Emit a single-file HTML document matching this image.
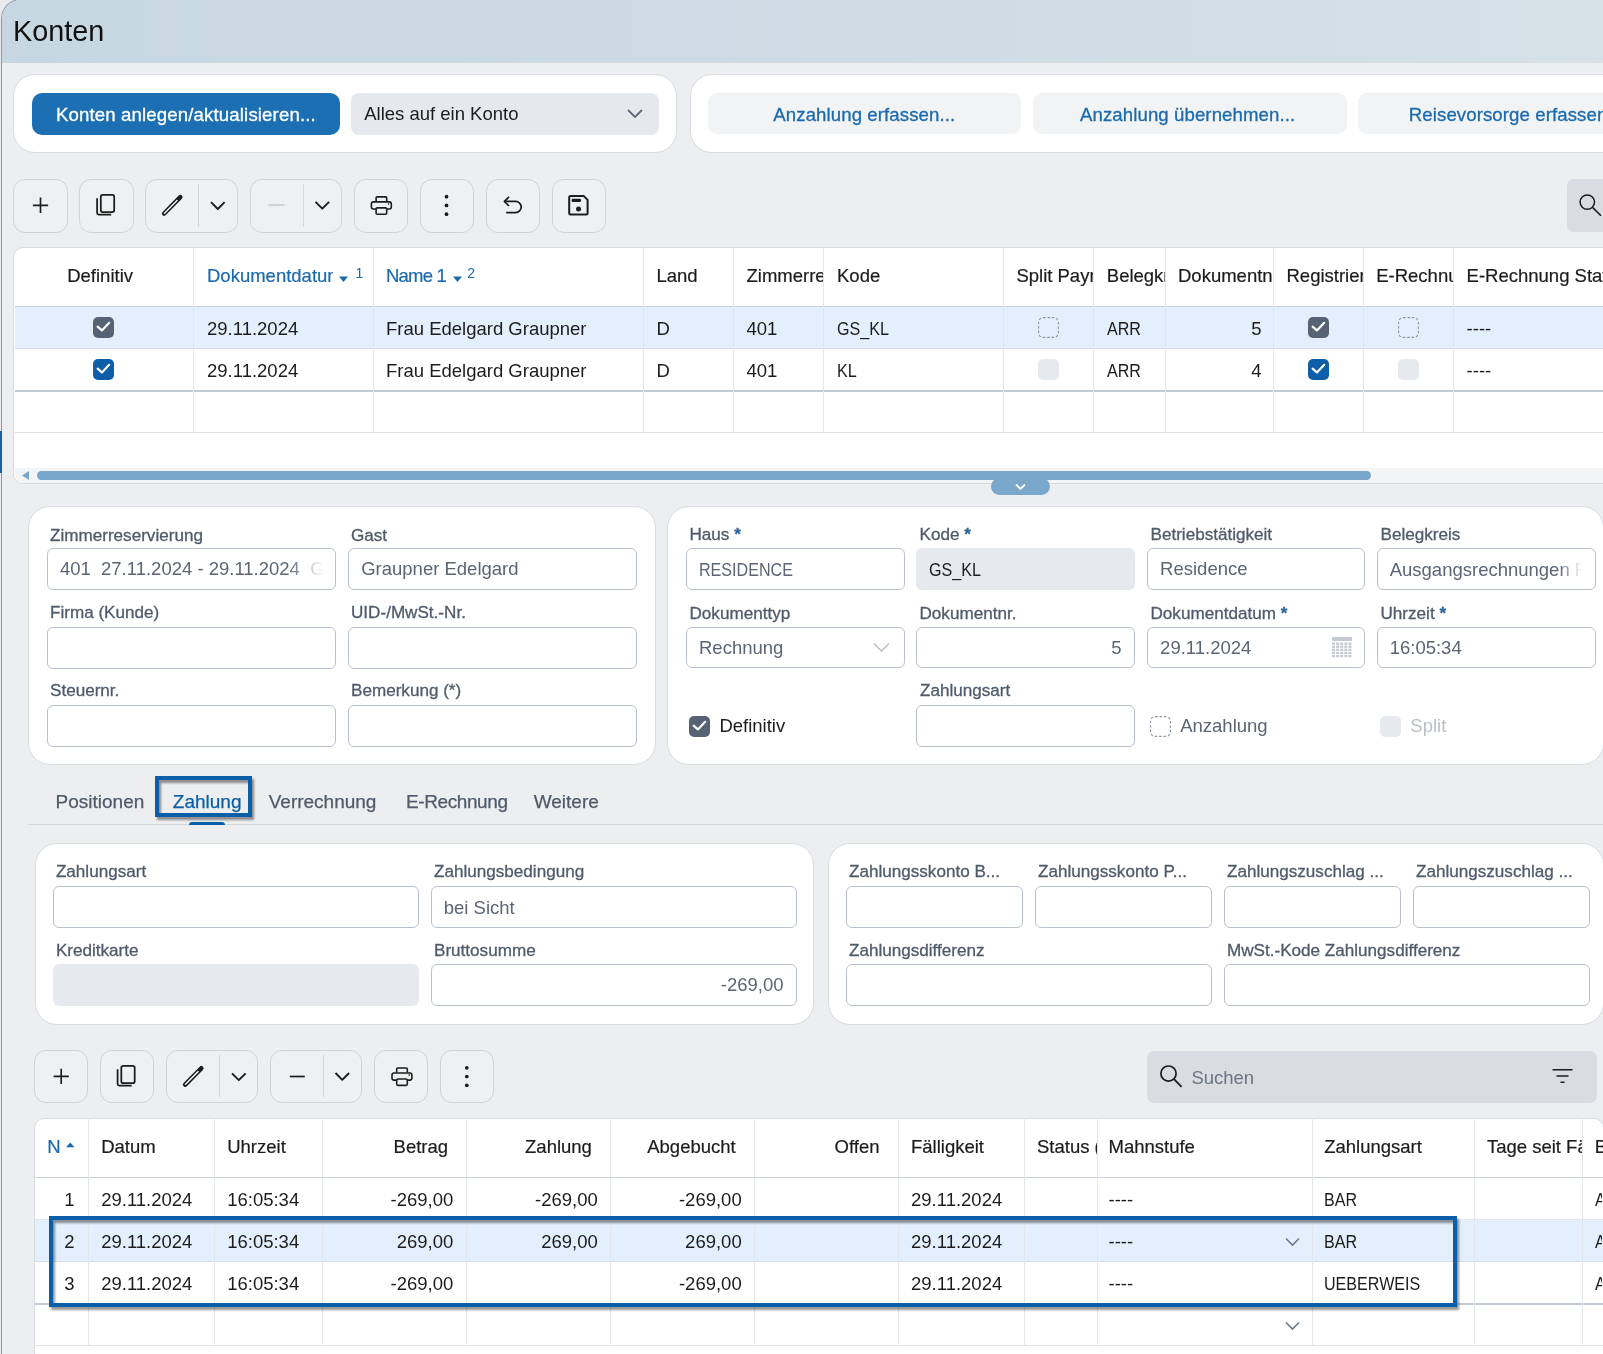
<!DOCTYPE html><html><head><meta charset="utf-8"><style>
*{box-sizing:border-box;margin:0;padding:0}
html,body{width:1603px;height:1354px;overflow:hidden}
body{position:relative;will-change:transform;background:#e8eaee;font-family:"Liberation Sans",sans-serif;color:#1c1c1c}
.a{position:absolute}
.t{position:absolute;white-space:nowrap;line-height:1}
svg{position:absolute;overflow:visible}
</style></head><body><div class="a" style="left:1px;top:-1px;width:1700px;height:1400px;background:#edeef0;border-left:1.3px solid #8e98a6;border-top:1.3px solid #8e98a6;border-top-left-radius:20px"></div><div class="a" style="left:2.3px;top:0.3px;width:1700px;height:62.7px;background:linear-gradient(90deg,#c7d7e1 0%,#cddae3 40%,#d6e1e8 100%);border-top-left-radius:19px"></div><div class="t" style="left:13.0px;top:17.1px;font-size:28.8px;color:#111;">Konten</div><div class="a" style="left:0px;top:431px;width:2px;height:42px;background:#1f5f9c"></div><div class="a" style="left:13px;top:74px;width:664px;height:79px;background:#fff;border:1px solid #d8dce2;border-radius:22px"></div><div class="a" style="left:32px;top:93px;width:308px;height:42px;background:#1b6fb2;border-radius:10px"></div><div class="t" style="left:55.9px;top:105.7px;font-size:18.6px;color:#fff;-webkit-text-stroke:0.3px #fff;letter-spacing:0.15px">Konten anlegen/aktualisieren...</div><div class="a" style="left:351px;top:93px;width:308px;height:42px;background:#e5e8ec;border-radius:8px"></div><div class="t" style="left:364.2px;top:105.1px;font-size:18.5px;color:#1c1c1c;">Alles auf ein Konto</div><svg style="left:627px;top:109px" width="16" height="9"><path d="M1 1 L8 8 L15 1" fill="none" stroke="#5d6878" stroke-width="1.8"/></svg><div class="a" style="left:690px;top:74px;width:1010px;height:79px;background:#fff;border:1px solid #d8dce2;border-radius:22px"></div><div class="a" style="left:708px;top:93px;width:313px;height:41px;background:#f1f3f5;border-radius:9px"></div><div class="t" style="left:773.3px;top:106.3px;font-size:18.6px;color:#1b6aad;-webkit-text-stroke:0.3px #1b6aad;letter-spacing:0.1px">Anzahlung erfassen...</div><div class="a" style="left:1033px;top:93px;width:314px;height:41px;background:#f1f3f5;border-radius:9px"></div><div class="t" style="left:1080.0px;top:106.3px;font-size:18.6px;color:#1b6aad;-webkit-text-stroke:0.3px #1b6aad;letter-spacing:0.1px">Anzahlung übernehmen...</div><div class="a" style="left:1358px;top:93px;width:342px;height:41px;background:#f1f3f5;border-radius:9px"></div><div class="t" style="left:1408.8px;top:106.3px;font-size:18.6px;color:#1b6aad;-webkit-text-stroke:0.3px #1b6aad;letter-spacing:0.1px">Reisevorsorge erfassen...</div><div class="a" style="left:13px;top:179px;width:55px;height:54px;border:1px solid #cfd3d9;border-radius:12px;background:#eef0f2"></div><div class="a" style="left:79px;top:179px;width:55px;height:54px;border:1px solid #cfd3d9;border-radius:12px;background:#eef0f2"></div><div class="a" style="left:145px;top:179px;width:93px;height:54px;border:1px solid #cfd3d9;border-radius:12px;background:#eef0f2"></div><div class="a" style="left:198.1px;top:184px;width:1px;height:43px;background:#d2d6db"></div><div class="a" style="left:250px;top:179px;width:92px;height:54px;border:1px solid #cfd3d9;border-radius:12px;background:#eef0f2"></div><div class="a" style="left:303.0px;top:184px;width:1px;height:43px;background:#d2d6db"></div><div class="a" style="left:354px;top:179px;width:54px;height:54px;border:1px solid #cfd3d9;border-radius:12px;background:#eef0f2"></div><div class="a" style="left:420px;top:179px;width:54px;height:54px;border:1px solid #cfd3d9;border-radius:12px;background:#eef0f2"></div><div class="a" style="left:486px;top:179px;width:54px;height:54px;border:1px solid #cfd3d9;border-radius:12px;background:#eef0f2"></div><div class="a" style="left:552px;top:179px;width:54px;height:54px;border:1px solid #cfd3d9;border-radius:12px;background:#eef0f2"></div><div class="a" style="left:1567px;top:179px;width:133px;height:53px;background:#d9dce1;border-radius:7px"></div><div class="a" style="left:13px;top:247px;width:1687px;height:237px;background:#fff;border:1px solid #d8dce2;border-top-left-radius:10px;border-bottom-left-radius:10px;overflow:hidden"></div><div class="a" style="left:15px;top:307px;width:1685px;height:41px;background:#e3effc"></div><div class="a" style="left:15px;top:306px;width:1685px;height:1px;background:#c9d0d8"></div><div class="a" style="left:15px;top:348px;width:1685px;height:1px;background:#d5dde8"></div><div class="a" style="left:15px;top:390px;width:1685px;height:2px;background:#c3cad3"></div><div class="a" style="left:15px;top:432px;width:1685px;height:1px;background:#dfe3e8"></div><div class="a" style="left:193px;top:248px;width:1px;height:185px;background:#e3e7ec"></div><div class="a" style="left:373px;top:248px;width:1px;height:185px;background:#e3e7ec"></div><div class="a" style="left:643px;top:248px;width:1px;height:185px;background:#e3e7ec"></div><div class="a" style="left:733px;top:248px;width:1px;height:185px;background:#e3e7ec"></div><div class="a" style="left:823px;top:248px;width:1px;height:185px;background:#e3e7ec"></div><div class="a" style="left:1003px;top:248px;width:1px;height:185px;background:#e3e7ec"></div><div class="a" style="left:1093px;top:248px;width:1px;height:185px;background:#e3e7ec"></div><div class="a" style="left:1165px;top:248px;width:1px;height:185px;background:#e3e7ec"></div><div class="a" style="left:1273px;top:248px;width:1px;height:185px;background:#e3e7ec"></div><div class="a" style="left:1363px;top:248px;width:1px;height:185px;background:#e3e7ec"></div><div class="a" style="left:1453px;top:248px;width:1px;height:185px;background:#e3e7ec"></div><div class="a" style="left:15px;top:468px;width:1685px;height:15px;background:#f3f4f6;border-bottom-left-radius:9px"></div><div class="a" style="left:37px;top:471px;width:1334px;height:9px;background:#78a7cb;border-radius:5px"></div><svg style="left:0;top:0" width="1603" height="1354"><path d="M22 475.5 L29 471 L29 480 Z" fill="#78a7cb"/></svg><div class="a" style="left:991px;top:478px;width:59px;height:17px;background:#7aa7cc;border-radius:9px"></div><svg style="left:0;top:0" width="1603" height="1354"><path d="M1016 484.5 L1020.5 489 L1025 484.5" fill="none" stroke="#fff" stroke-width="1.8"/></svg><div class="t" style="left:67.2px;top:263.0px;width:125.8px;overflow:hidden;font-size:18.5px;color:#1c1c1c;line-height:1.4;-webkit-text-stroke:0.2px currentColor">Definitiv</div><div class="t" style="left:207.0px;top:263.0px;width:126.0px;overflow:hidden;font-size:18.5px;color:#1b6aad;line-height:1.4;-webkit-text-stroke:0.2px currentColor">Dokumentdatum</div><svg style="left:0;top:0" width="1603" height="1354"><path d="M339 276.5 L348 276.5 L343.5 282 Z" fill="#1b6aad"/><path d="M453 276.5 L462 276.5 L457.5 282 Z" fill="#1b6aad"/></svg><div class="t" style="left:355.5px;top:265.6px;font-size:14px;color:#1b6aad;">1</div><div class="t" style="left:386.0px;top:263.0px;width:64.0px;overflow:hidden;font-size:18.5px;color:#1b6aad;line-height:1.4;-webkit-text-stroke:0.2px currentColor;letter-spacing:-0.8px">Name 1</div><div class="t" style="left:467.3px;top:266.0px;font-size:14px;color:#1b6aad;">2</div><div class="t" style="left:656.5px;top:263.0px;width:76.5px;overflow:hidden;font-size:18.5px;color:#1c1c1c;line-height:1.4;-webkit-text-stroke:0.2px currentColor">Land</div><div class="t" style="left:746.5px;top:263.0px;width:76.5px;overflow:hidden;font-size:18.5px;color:#1c1c1c;line-height:1.4;-webkit-text-stroke:0.2px currentColor">Zimmerreservierung</div><div class="t" style="left:837.0px;top:263.0px;width:166.0px;overflow:hidden;font-size:18.5px;color:#1c1c1c;line-height:1.4;-webkit-text-stroke:0.2px currentColor">Kode</div><div class="t" style="left:1016.4px;top:263.0px;width:76.6px;overflow:hidden;font-size:18.5px;color:#1c1c1c;line-height:1.4;-webkit-text-stroke:0.2px currentColor">Split Payment</div><div class="t" style="left:1106.8px;top:263.0px;width:58.2px;overflow:hidden;font-size:18.5px;color:#1c1c1c;line-height:1.4;-webkit-text-stroke:0.2px currentColor">Belegkreis</div><div class="t" style="left:1178.0px;top:263.0px;width:95.0px;overflow:hidden;font-size:18.5px;color:#1c1c1c;line-height:1.4;-webkit-text-stroke:0.2px currentColor">Dokumentnummer</div><div class="t" style="left:1286.5px;top:263.0px;width:76.5px;overflow:hidden;font-size:18.5px;color:#1c1c1c;line-height:1.4;-webkit-text-stroke:0.2px currentColor">Registrierkasse</div><div class="t" style="left:1376.2px;top:263.0px;width:76.8px;overflow:hidden;font-size:18.5px;color:#1c1c1c;line-height:1.4;-webkit-text-stroke:0.2px currentColor">E-Rechnung</div><div class="t" style="left:1466.6px;top:263.0px;width:136.4px;overflow:hidden;font-size:18.5px;color:#1c1c1c;line-height:1.4;-webkit-text-stroke:0.2px currentColor">E-Rechnung Status</div><div class="a" style="left:93.0px;top:316.7px;width:21px;height:21px;border-radius:5px;background:#576275"></div><svg style="left:93.0px;top:316.7px" width="21" height="21"><path d="M4.6 9.6 L8.9 13.4 L16.2 5.8" fill="none" stroke="#fff" stroke-width="2.1" stroke-linecap="round" stroke-linejoin="round"/></svg><div class="t" style="left:207.0px;top:316.1px;width:166.0px;overflow:hidden;font-size:18.5px;color:#1c1c1c;line-height:1.4;">29.11.2024</div><div class="t" style="left:386.0px;top:316.1px;width:257.0px;overflow:hidden;font-size:18.5px;color:#1c1c1c;line-height:1.4;">Frau Edelgard Graupner</div><div class="t" style="left:656.5px;top:316.1px;width:76.5px;overflow:hidden;font-size:18.5px;color:#1c1c1c;line-height:1.4;">D</div><div class="t" style="left:746.5px;top:316.1px;width:76.5px;overflow:hidden;font-size:18.5px;color:#1c1c1c;line-height:1.4;">401</div><div class="t" style="left:837.0px;top:316.1px;width:166.0px;overflow:hidden;font-size:18.5px;color:#1c1c1c;line-height:1.4;transform:scaleX(.87);transform-origin:0 0;">GS_KL</div><svg style="left:1037.5px;top:316.7px" width="21" height="21"><rect x="0.6" y="0.6" width="19.8" height="19.8" rx="4.5" fill="none" stroke="#8f98a5" stroke-width="1.1" stroke-dasharray="2.6 1.8"/></svg><div class="t" style="left:1106.8px;top:316.1px;width:58.2px;overflow:hidden;font-size:18.5px;color:#1c1c1c;line-height:1.4;transform:scaleX(.87);transform-origin:0 0;">ARR</div><div class="t" style="left:1165.0px;top:316.1px;width:96.5px;overflow:hidden;text-align:right;font-size:18.5px;color:#1c1c1c;line-height:1.4;">5</div><div class="a" style="left:1307.5px;top:316.7px;width:21px;height:21px;border-radius:5px;background:#576275"></div><svg style="left:1307.5px;top:316.7px" width="21" height="21"><path d="M4.6 9.6 L8.9 13.4 L16.2 5.8" fill="none" stroke="#fff" stroke-width="2.1" stroke-linecap="round" stroke-linejoin="round"/></svg><svg style="left:1397.5px;top:316.7px" width="21" height="21"><rect x="0.6" y="0.6" width="19.8" height="19.8" rx="4.5" fill="none" stroke="#8f98a5" stroke-width="1.1" stroke-dasharray="2.6 1.8"/></svg><div class="t" style="left:1466.6px;top:316.1px;width:136.4px;overflow:hidden;font-size:18.5px;color:#1c1c1c;line-height:1.4;">----</div><div class="a" style="left:93.0px;top:358.7px;width:21px;height:21px;border-radius:5px;background:#0f5fa8"></div><svg style="left:93.0px;top:358.7px" width="21" height="21"><path d="M4.6 9.6 L8.9 13.4 L16.2 5.8" fill="none" stroke="#fff" stroke-width="2.1" stroke-linecap="round" stroke-linejoin="round"/></svg><div class="t" style="left:207.0px;top:358.1px;width:166.0px;overflow:hidden;font-size:18.5px;color:#1c1c1c;line-height:1.4;">29.11.2024</div><div class="t" style="left:386.0px;top:358.1px;width:257.0px;overflow:hidden;font-size:18.5px;color:#1c1c1c;line-height:1.4;">Frau Edelgard Graupner</div><div class="t" style="left:656.5px;top:358.1px;width:76.5px;overflow:hidden;font-size:18.5px;color:#1c1c1c;line-height:1.4;">D</div><div class="t" style="left:746.5px;top:358.1px;width:76.5px;overflow:hidden;font-size:18.5px;color:#1c1c1c;line-height:1.4;">401</div><div class="t" style="left:837.0px;top:358.1px;width:166.0px;overflow:hidden;font-size:18.5px;color:#1c1c1c;line-height:1.4;transform:scaleX(.87);transform-origin:0 0;">KL</div><div class="a" style="left:1037.5px;top:358.7px;width:21px;height:21px;border-radius:5px;background:#e6e9ed"></div><div class="t" style="left:1106.8px;top:358.1px;width:58.2px;overflow:hidden;font-size:18.5px;color:#1c1c1c;line-height:1.4;transform:scaleX(.87);transform-origin:0 0;">ARR</div><div class="t" style="left:1165.0px;top:358.1px;width:96.5px;overflow:hidden;text-align:right;font-size:18.5px;color:#1c1c1c;line-height:1.4;">4</div><div class="a" style="left:1307.5px;top:358.7px;width:21px;height:21px;border-radius:5px;background:#0f5fa8"></div><svg style="left:1307.5px;top:358.7px" width="21" height="21"><path d="M4.6 9.6 L8.9 13.4 L16.2 5.8" fill="none" stroke="#fff" stroke-width="2.1" stroke-linecap="round" stroke-linejoin="round"/></svg><div class="a" style="left:1397.5px;top:358.7px;width:21px;height:21px;border-radius:5px;background:#e6e9ed"></div><div class="t" style="left:1466.6px;top:358.1px;width:136.4px;overflow:hidden;font-size:18.5px;color:#1c1c1c;line-height:1.4;">----</div><div class="a" style="left:28px;top:506px;width:628px;height:259px;background:#fff;border:1px solid #d8dce2;border-radius:22px"></div><div class="a" style="left:667px;top:506px;width:937px;height:259px;background:#fff;border:1px solid #d8dce2;border-radius:22px"></div><div class="t" style="left:50.0px;top:526.5px;font-size:17.1px;color:#4f5b6a;-webkit-text-stroke:0.3px #4f5b6a;">Zimmerreservierung</div><div class="t" style="left:351.0px;top:526.5px;font-size:17.1px;color:#4f5b6a;-webkit-text-stroke:0.3px #4f5b6a;">Gast</div><div class="a" style="left:47.0px;top:548.0px;width:289.0px;height:42.0px;background:#fff;border:1px solid #b9c1cc;border-radius:6px"></div><div class="a" style="left:348.0px;top:548.0px;width:289.0px;height:42.0px;background:#fff;border:1px solid #b9c1cc;border-radius:6px"></div><div class="t" style="left:50.0px;top:604.4px;font-size:17.1px;color:#4f5b6a;-webkit-text-stroke:0.3px #4f5b6a;">Firma (Kunde)</div><div class="t" style="left:351.0px;top:604.4px;font-size:17.1px;color:#4f5b6a;-webkit-text-stroke:0.3px #4f5b6a;">UID-/MwSt.-Nr.</div><div class="a" style="left:47.0px;top:627.0px;width:289.0px;height:42.0px;background:#fff;border:1px solid #b9c1cc;border-radius:6px"></div><div class="a" style="left:348.0px;top:627.0px;width:289.0px;height:42.0px;background:#fff;border:1px solid #b9c1cc;border-radius:6px"></div><div class="t" style="left:50.0px;top:682.4px;font-size:17.1px;color:#4f5b6a;-webkit-text-stroke:0.3px #4f5b6a;">Steuernr.</div><div class="t" style="left:351.0px;top:682.4px;font-size:17.1px;color:#4f5b6a;-webkit-text-stroke:0.3px #4f5b6a;">Bemerkung (*)</div><div class="a" style="left:47.0px;top:705.0px;width:289.0px;height:42.0px;background:#fff;border:1px solid #b9c1cc;border-radius:6px"></div><div class="a" style="left:348.0px;top:705.0px;width:289.0px;height:42.0px;background:#fff;border:1px solid #b9c1cc;border-radius:6px"></div><div class="t" style="left:59.9px;top:556.3px;line-height:1.4;width:264px;overflow:hidden;font-size:18.5px;color:#5b6573;-webkit-mask-image:linear-gradient(90deg,#000 86%,transparent 100%)">401&nbsp; 27.11.2024 - 29.11.2024&nbsp; Graupner</div><div class="t" style="left:361.2px;top:560.0px;font-size:18.5px;color:#5b6573;">Graupner Edelgard</div><div class="t" style="left:689.5px;top:526.0px;font-size:17.1px;color:#4f5b6a;-webkit-text-stroke:0.3px #4f5b6a;">Haus <span style="color:#1b6aad;font-weight:bold">*</span></div><div class="a" style="left:686.0px;top:548.0px;width:219.0px;height:42.0px;background:#fff;border:1px solid #b9c1cc;border-radius:6px"></div><div class="t" style="left:919.5px;top:526.0px;font-size:17.1px;color:#4f5b6a;-webkit-text-stroke:0.3px #4f5b6a;">Kode <span style="color:#1b6aad;font-weight:bold">*</span></div><div class="a" style="left:916.0px;top:548.0px;width:219.0px;height:42.0px;background:#e6e9ed;border-radius:6px"></div><div class="t" style="left:1150.5px;top:526.0px;font-size:17.1px;color:#4f5b6a;-webkit-text-stroke:0.3px #4f5b6a;">Betriebstätigkeit</div><div class="a" style="left:1147.0px;top:548.0px;width:218.0px;height:42.0px;background:#fff;border:1px solid #b9c1cc;border-radius:6px"></div><div class="t" style="left:1380.5px;top:526.0px;font-size:17.1px;color:#4f5b6a;-webkit-text-stroke:0.3px #4f5b6a;">Belegkreis</div><div class="a" style="left:1377.0px;top:548.0px;width:219.0px;height:42.0px;background:#fff;border:1px solid #b9c1cc;border-radius:6px"></div><div class="t" style="left:689.5px;top:604.5px;font-size:17.1px;color:#4f5b6a;-webkit-text-stroke:0.3px #4f5b6a;">Dokumenttyp</div><div class="a" style="left:686.0px;top:627.0px;width:219.0px;height:41.0px;background:#fff;border:1px solid #b9c1cc;border-radius:6px"></div><div class="t" style="left:919.5px;top:604.5px;font-size:17.1px;color:#4f5b6a;-webkit-text-stroke:0.3px #4f5b6a;">Dokumentnr.</div><div class="a" style="left:916.0px;top:627.0px;width:219.0px;height:41.0px;background:#fff;border:1px solid #b9c1cc;border-radius:6px"></div><div class="t" style="left:1150.5px;top:604.5px;font-size:17.1px;color:#4f5b6a;-webkit-text-stroke:0.3px #4f5b6a;">Dokumentdatum <span style="color:#1b6aad;font-weight:bold">*</span></div><div class="a" style="left:1147.0px;top:627.0px;width:218.0px;height:41.0px;background:#fff;border:1px solid #b9c1cc;border-radius:6px"></div><div class="t" style="left:1380.5px;top:604.5px;font-size:17.1px;color:#4f5b6a;-webkit-text-stroke:0.3px #4f5b6a;">Uhrzeit <span style="color:#1b6aad;font-weight:bold">*</span></div><div class="a" style="left:1377.0px;top:627.0px;width:219.0px;height:41.0px;background:#fff;border:1px solid #b9c1cc;border-radius:6px"></div><div class="t" style="left:699.0px;top:560.6px;font-size:18.5px;color:#5b6573;transform:scaleX(.87);transform-origin:0 0;">RESIDENCE</div><div class="t" style="left:929.3px;top:560.6px;font-size:18.5px;color:#1c1c1c;transform:scaleX(.87);transform-origin:0 0;">GS_KL</div><div class="t" style="left:1160.1px;top:560.4px;font-size:18.5px;color:#5b6573;">Residence</div><div class="t" style="left:1389.7px;top:556.7px;line-height:1.4;width:192px;overflow:hidden;font-size:18.5px;color:#5b6573;-webkit-mask-image:linear-gradient(90deg,#000 88%,transparent 100%)">Ausgangsrechnungen Rechnung</div><div class="t" style="left:699.0px;top:638.5px;font-size:18.5px;color:#5b6573;">Rechnung</div><div class="t" style="right:481.5px;top:639.2px;font-size:18.5px;color:#5b6573;">5</div><div class="t" style="left:1160.1px;top:639.2px;font-size:18.5px;color:#5b6573;">29.11.2024</div><div class="t" style="left:1389.7px;top:639.2px;font-size:18.5px;color:#5b6573;">16:05:34</div><div class="t" style="left:920.0px;top:682.2px;font-size:17.1px;color:#4f5b6a;-webkit-text-stroke:0.3px #4f5b6a;">Zahlungsart</div><div class="a" style="left:916.0px;top:705.0px;width:219.0px;height:42.0px;background:#fff;border:1px solid #b9c1cc;border-radius:6px"></div><div class="a" style="left:689.0px;top:715.7px;width:21px;height:21px;border-radius:5px;background:#576275"></div><svg style="left:689.0px;top:715.7px" width="21" height="21"><path d="M4.6 9.6 L8.9 13.4 L16.2 5.8" fill="none" stroke="#fff" stroke-width="2.1" stroke-linecap="round" stroke-linejoin="round"/></svg><div class="t" style="left:719.4px;top:717.3px;font-size:18.5px;color:#1c1c1c;">Definitiv</div><svg style="left:1150.0px;top:715.7px" width="21" height="21"><rect x="0.6" y="0.6" width="19.8" height="19.8" rx="4.5" fill="none" stroke="#8f98a5" stroke-width="1.1" stroke-dasharray="2.6 1.8"/></svg><div class="t" style="left:1180.2px;top:717.4px;font-size:18.5px;color:#5b6573;">Anzahlung</div><div class="a" style="left:1380.0px;top:715.7px;width:21px;height:21px;border-radius:5px;background:#e6e9ed"></div><div class="t" style="left:1410.3px;top:717.4px;font-size:18.5px;color:#b9bfc7;">Split</div><svg style="left:0;top:0" width="1603" height="1354"><path d="M874 643.5 L881.5 651 L889 643.5" fill="none" stroke="#b9c0ca" stroke-width="1.5"/></svg><svg style="left:0;top:0" width="1603" height="1354"><g fill="#c5cad2"><rect x="1332" y="637" width="20" height="4" rx="1"/><rect x="1332.0" y="642.5" width="3" height="2.3"/><rect x="1336.1" y="642.5" width="3" height="2.3"/><rect x="1340.2" y="642.5" width="3" height="2.3"/><rect x="1344.3" y="642.5" width="3" height="2.3"/><rect x="1348.4" y="642.5" width="3" height="2.3"/><rect x="1332.0" y="645.6" width="3" height="2.3"/><rect x="1336.1" y="645.6" width="3" height="2.3"/><rect x="1340.2" y="645.6" width="3" height="2.3"/><rect x="1344.3" y="645.6" width="3" height="2.3"/><rect x="1348.4" y="645.6" width="3" height="2.3"/><rect x="1332.0" y="648.7" width="3" height="2.3"/><rect x="1336.1" y="648.7" width="3" height="2.3"/><rect x="1340.2" y="648.7" width="3" height="2.3"/><rect x="1344.3" y="648.7" width="3" height="2.3"/><rect x="1348.4" y="648.7" width="3" height="2.3"/><rect x="1332.0" y="651.8" width="3" height="2.3"/><rect x="1336.1" y="651.8" width="3" height="2.3"/><rect x="1340.2" y="651.8" width="3" height="2.3"/><rect x="1344.3" y="651.8" width="3" height="2.3"/><rect x="1348.4" y="651.8" width="3" height="2.3"/><rect x="1332.0" y="654.9" width="3" height="2.3"/><rect x="1336.1" y="654.9" width="3" height="2.3"/><rect x="1340.2" y="654.9" width="3" height="2.3"/><rect x="1344.3" y="654.9" width="3" height="2.3"/><rect x="1348.4" y="654.9" width="3" height="2.3"/></g></svg><div class="a" style="left:28px;top:824px;width:1672px;height:1px;background:#d3d7dd"></div><div class="t" style="left:55.6px;top:792.3px;font-size:19px;color:#4f5b6a;-webkit-text-stroke:0.25px #4f5b6a">Positionen</div><div class="t" style="left:172.8px;top:792.3px;font-size:19px;color:#0a5fa8;-webkit-text-stroke:0.25px #0a5fa8">Zahlung</div><div class="t" style="left:268.7px;top:792.3px;font-size:19px;color:#4f5b6a;-webkit-text-stroke:0.25px #4f5b6a">Verrechnung</div><div class="t" style="left:406.0px;top:792.3px;font-size:19px;color:#4f5b6a;-webkit-text-stroke:0.25px #4f5b6a;letter-spacing:-0.4px">E-Rechnung</div><div class="t" style="left:533.7px;top:792.3px;font-size:19px;color:#4f5b6a;-webkit-text-stroke:0.25px #4f5b6a">Weitere</div><div class="a" style="left:189px;top:822px;width:36px;height:3px;background:#0a5fa8;border-radius:3px 3px 0 0"></div><div class="a" style="left:155px;top:776px;width:97px;height:41px;border:4px solid #0a5fa8;filter:drop-shadow(2px 3px 1.2px rgba(0,0,0,.42))"></div><div class="a" style="left:35px;top:843px;width:779px;height:182px;background:#fff;border:1px solid #d8dce2;border-radius:22px"></div><div class="a" style="left:828px;top:843px;width:776px;height:182px;background:#fff;border:1px solid #d8dce2;border-radius:22px"></div><div class="t" style="left:55.9px;top:863.2px;font-size:17.1px;color:#4f5b6a;-webkit-text-stroke:0.3px #4f5b6a;">Zahlungsart</div><div class="t" style="left:434.0px;top:863.2px;font-size:17.1px;color:#4f5b6a;-webkit-text-stroke:0.3px #4f5b6a;">Zahlungsbedingung</div><div class="a" style="left:53.0px;top:886.0px;width:366.0px;height:42.0px;background:#fff;border:1px solid #b9c1cc;border-radius:6px"></div><div class="a" style="left:431.0px;top:886.0px;width:366.0px;height:42.0px;background:#fff;border:1px solid #b9c1cc;border-radius:6px"></div><div class="t" style="left:55.9px;top:942.2px;font-size:17.1px;color:#4f5b6a;-webkit-text-stroke:0.3px #4f5b6a;">Kreditkarte</div><div class="t" style="left:434.0px;top:942.2px;font-size:17.1px;color:#4f5b6a;-webkit-text-stroke:0.3px #4f5b6a;">Bruttosumme</div><div class="a" style="left:53.0px;top:964.0px;width:366.0px;height:42.0px;background:#e6e9ed;border-radius:6px"></div><div class="a" style="left:431.0px;top:964.0px;width:366.0px;height:42.0px;background:#fff;border:1px solid #b9c1cc;border-radius:6px"></div><div class="t" style="left:443.8px;top:898.7px;font-size:18.5px;color:#5b6573;">bei Sicht</div><div class="t" style="right:819.5px;top:976.4px;font-size:18.5px;color:#5b6573;">-269,00</div><div class="t" style="left:849.0px;top:863.4px;font-size:17.1px;color:#4f5b6a;-webkit-text-stroke:0.3px #4f5b6a;">Zahlungsskonto B...</div><div class="a" style="left:846.0px;top:886.0px;width:177.0px;height:42.0px;background:#fff;border:1px solid #b9c1cc;border-radius:6px"></div><div class="t" style="left:1038.0px;top:863.4px;font-size:17.1px;color:#4f5b6a;-webkit-text-stroke:0.3px #4f5b6a;">Zahlungsskonto P...</div><div class="a" style="left:1035.0px;top:886.0px;width:177.0px;height:42.0px;background:#fff;border:1px solid #b9c1cc;border-radius:6px"></div><div class="t" style="left:1227.0px;top:863.4px;font-size:17.1px;color:#4f5b6a;-webkit-text-stroke:0.3px #4f5b6a;">Zahlungszuschlag ...</div><div class="a" style="left:1224.0px;top:886.0px;width:177.0px;height:42.0px;background:#fff;border:1px solid #b9c1cc;border-radius:6px"></div><div class="t" style="left:1416.0px;top:863.4px;font-size:17.1px;color:#4f5b6a;-webkit-text-stroke:0.3px #4f5b6a;">Zahlungszuschlag ...</div><div class="a" style="left:1413.0px;top:886.0px;width:177.0px;height:42.0px;background:#fff;border:1px solid #b9c1cc;border-radius:6px"></div><div class="t" style="left:849.0px;top:942.2px;font-size:17.1px;color:#4f5b6a;-webkit-text-stroke:0.3px #4f5b6a;">Zahlungsdifferenz</div><div class="t" style="left:1227.0px;top:942.2px;font-size:17.1px;color:#4f5b6a;-webkit-text-stroke:0.3px #4f5b6a;">MwSt.-Kode Zahlungsdifferenz</div><div class="a" style="left:846.0px;top:964.0px;width:366.0px;height:42.0px;background:#fff;border:1px solid #b9c1cc;border-radius:6px"></div><div class="a" style="left:1224.0px;top:964.0px;width:366.0px;height:42.0px;background:#fff;border:1px solid #b9c1cc;border-radius:6px"></div><div class="a" style="left:34px;top:1050px;width:54px;height:53px;border:1px solid #cfd3d9;border-radius:12px;background:#eef0f2"></div><div class="a" style="left:100px;top:1050px;width:54px;height:53px;border:1px solid #cfd3d9;border-radius:12px;background:#eef0f2"></div><div class="a" style="left:166px;top:1050px;width:92px;height:53px;border:1px solid #cfd3d9;border-radius:12px;background:#eef0f2"></div><div class="a" style="left:219.1px;top:1055px;width:1px;height:42px;background:#d2d6db"></div><div class="a" style="left:270px;top:1050px;width:92px;height:53px;border:1px solid #cfd3d9;border-radius:12px;background:#eef0f2"></div><div class="a" style="left:322.7px;top:1055px;width:1px;height:42px;background:#d2d6db"></div><div class="a" style="left:374px;top:1050px;width:54px;height:53px;border:1px solid #cfd3d9;border-radius:12px;background:#eef0f2"></div><div class="a" style="left:440px;top:1050px;width:54px;height:53px;border:1px solid #cfd3d9;border-radius:12px;background:#eef0f2"></div><div class="a" style="left:1147px;top:1051px;width:450px;height:52px;background:#d9dce1;border-radius:7px"></div><div class="t" style="left:1191.4px;top:1068.6px;font-size:18.5px;color:#6b7585;">Suchen</div><div class="a" style="left:34px;top:1117.5px;width:1570px;height:282.5px;background:#fff;border:1px solid #d8dce2;border-top-left-radius:10px;border-top-right-radius:10px"></div><div class="a" style="left:35px;top:1219px;width:1665px;height:42px;background:#e3effc"></div><div class="a" style="left:35px;top:1177px;width:1665px;height:1px;background:#c9d0d8"></div><div class="a" style="left:35px;top:1219px;width:1665px;height:1px;background:#e3e7ec"></div><div class="a" style="left:35px;top:1261px;width:1665px;height:1px;background:#d5dde8"></div><div class="a" style="left:35px;top:1303px;width:1665px;height:2px;background:#c3cad3"></div><div class="a" style="left:35px;top:1345px;width:1665px;height:1px;background:#dfe3e8"></div><div class="a" style="left:88px;top:1118px;width:1px;height:228px;background:#e3e7ec"></div><div class="a" style="left:214px;top:1118px;width:1px;height:228px;background:#e3e7ec"></div><div class="a" style="left:322px;top:1118px;width:1px;height:228px;background:#e3e7ec"></div><div class="a" style="left:466px;top:1118px;width:1px;height:228px;background:#e3e7ec"></div><div class="a" style="left:610px;top:1118px;width:1px;height:228px;background:#e3e7ec"></div><div class="a" style="left:754px;top:1118px;width:1px;height:228px;background:#e3e7ec"></div><div class="a" style="left:898px;top:1118px;width:1px;height:228px;background:#e3e7ec"></div><div class="a" style="left:1024px;top:1118px;width:1px;height:228px;background:#e3e7ec"></div><div class="a" style="left:1097px;top:1118px;width:1px;height:228px;background:#e3e7ec"></div><div class="a" style="left:1312px;top:1118px;width:1px;height:228px;background:#e3e7ec"></div><div class="a" style="left:1474px;top:1118px;width:1px;height:228px;background:#e3e7ec"></div><div class="a" style="left:1582px;top:1118px;width:1px;height:228px;background:#e3e7ec"></div><div class="t" style="left:47.3px;top:1137.9px;font-size:18.5px;color:#1b6aad;-webkit-text-stroke:0.2px currentColor">N</div><svg style="left:0;top:0" width="1603" height="1354"><path d="M66 1147.3 L74.5 1147.3 L70.25 1142.5 Z" fill="#1b6aad"/></svg><div class="t" style="left:101.2px;top:1134.2px;width:113.3px;overflow:hidden;font-size:18.5px;color:#1c1c1c;line-height:1.4;-webkit-text-stroke:0.2px currentColor">Datum</div><div class="t" style="left:227.2px;top:1134.2px;width:94.8px;overflow:hidden;font-size:18.5px;color:#1c1c1c;line-height:1.4;-webkit-text-stroke:0.2px currentColor">Uhrzeit</div><div class="t" style="right:1154.9px;top:1137.9px;font-size:18.5px;color:#1c1c1c;-webkit-text-stroke:0.2px currentColor">Betrag</div><div class="t" style="right:1011.1px;top:1137.9px;font-size:18.5px;color:#1c1c1c;-webkit-text-stroke:0.2px currentColor">Zahlung</div><div class="t" style="right:867.3px;top:1137.9px;font-size:18.5px;color:#1c1c1c;-webkit-text-stroke:0.2px currentColor">Abgebucht</div><div class="t" style="right:723.5px;top:1137.9px;font-size:18.5px;color:#1c1c1c;-webkit-text-stroke:0.2px currentColor">Offen</div><div class="t" style="left:911.0px;top:1134.2px;width:113.5px;overflow:hidden;font-size:18.5px;color:#1c1c1c;line-height:1.4;-webkit-text-stroke:0.2px currentColor">Fälligkeit</div><div class="t" style="left:1037.0px;top:1134.2px;width:60.0px;overflow:hidden;font-size:18.5px;color:#1c1c1c;line-height:1.4;-webkit-text-stroke:0.2px currentColor">Status (Mahnung)</div><div class="t" style="left:1108.5px;top:1134.2px;width:203.9px;overflow:hidden;font-size:18.5px;color:#1c1c1c;line-height:1.4;-webkit-text-stroke:0.2px currentColor">Mahnstufe</div><div class="t" style="left:1324.2px;top:1134.2px;width:150.2px;overflow:hidden;font-size:18.5px;color:#1c1c1c;line-height:1.4;-webkit-text-stroke:0.2px currentColor">Zahlungsart</div><div class="t" style="left:1486.9px;top:1134.2px;width:95.5px;overflow:hidden;font-size:18.5px;color:#1c1c1c;line-height:1.4;-webkit-text-stroke:0.2px currentColor">Tage seit Fälligkeit</div><div class="t" style="left:1594.7px;top:1134.2px;width:8.3px;overflow:hidden;font-size:18.5px;color:#1c1c1c;line-height:1.4;-webkit-text-stroke:0.2px currentColor">Buchung</div><div class="t" style="right:1528.5px;top:1190.5px;font-size:18.5px;color:#1c1c1c;">1</div><div class="t" style="left:101.2px;top:1186.8px;width:113.3px;overflow:hidden;font-size:18.5px;color:#1c1c1c;line-height:1.4;">29.11.2024</div><div class="t" style="left:227.2px;top:1186.8px;width:94.8px;overflow:hidden;font-size:18.5px;color:#1c1c1c;line-height:1.4;">16:05:34</div><div class="t" style="right:1149.7px;top:1190.5px;font-size:18.5px;color:#1c1c1c;">-269,00</div><div class="t" style="right:1005.2px;top:1190.5px;font-size:18.5px;color:#1c1c1c;">-269,00</div><div class="t" style="right:861.3px;top:1190.5px;font-size:18.5px;color:#1c1c1c;">-269,00</div><div class="t" style="left:911.0px;top:1186.8px;width:113.5px;overflow:hidden;font-size:18.5px;color:#1c1c1c;line-height:1.4;">29.11.2024</div><div class="t" style="left:1108.5px;top:1186.8px;width:203.9px;overflow:hidden;font-size:18.5px;color:#1c1c1c;line-height:1.4;">----</div><div class="t" style="left:1324.2px;top:1186.8px;width:150.2px;overflow:hidden;font-size:18.5px;color:#1c1c1c;line-height:1.4;transform:scaleX(.87);transform-origin:0 0;">BAR</div><div class="t" style="left:1594.7px;top:1186.8px;width:8.3px;overflow:hidden;font-size:18.5px;color:#1c1c1c;line-height:1.4;transform:scaleX(.87);transform-origin:0 0;">ARR</div><div class="t" style="right:1528.5px;top:1232.5px;font-size:18.5px;color:#1c1c1c;">2</div><div class="t" style="left:101.2px;top:1228.8px;width:113.3px;overflow:hidden;font-size:18.5px;color:#1c1c1c;line-height:1.4;">29.11.2024</div><div class="t" style="left:227.2px;top:1228.8px;width:94.8px;overflow:hidden;font-size:18.5px;color:#1c1c1c;line-height:1.4;">16:05:34</div><div class="t" style="right:1149.7px;top:1232.5px;font-size:18.5px;color:#1c1c1c;">269,00</div><div class="t" style="right:1005.2px;top:1232.5px;font-size:18.5px;color:#1c1c1c;">269,00</div><div class="t" style="right:861.3px;top:1232.5px;font-size:18.5px;color:#1c1c1c;">269,00</div><div class="t" style="left:911.0px;top:1228.8px;width:113.5px;overflow:hidden;font-size:18.5px;color:#1c1c1c;line-height:1.4;">29.11.2024</div><div class="t" style="left:1108.5px;top:1228.8px;width:203.9px;overflow:hidden;font-size:18.5px;color:#1c1c1c;line-height:1.4;">----</div><div class="t" style="left:1324.2px;top:1228.8px;width:150.2px;overflow:hidden;font-size:18.5px;color:#1c1c1c;line-height:1.4;transform:scaleX(.87);transform-origin:0 0;">BAR</div><div class="t" style="left:1594.7px;top:1228.8px;width:8.3px;overflow:hidden;font-size:18.5px;color:#1c1c1c;line-height:1.4;transform:scaleX(.87);transform-origin:0 0;">ARR</div><div class="t" style="right:1528.5px;top:1274.5px;font-size:18.5px;color:#1c1c1c;">3</div><div class="t" style="left:101.2px;top:1270.8px;width:113.3px;overflow:hidden;font-size:18.5px;color:#1c1c1c;line-height:1.4;">29.11.2024</div><div class="t" style="left:227.2px;top:1270.8px;width:94.8px;overflow:hidden;font-size:18.5px;color:#1c1c1c;line-height:1.4;">16:05:34</div><div class="t" style="right:1149.7px;top:1274.5px;font-size:18.5px;color:#1c1c1c;">-269,00</div><div class="t" style="right:861.3px;top:1274.5px;font-size:18.5px;color:#1c1c1c;">-269,00</div><div class="t" style="left:911.0px;top:1270.8px;width:113.5px;overflow:hidden;font-size:18.5px;color:#1c1c1c;line-height:1.4;">29.11.2024</div><div class="t" style="left:1108.5px;top:1270.8px;width:203.9px;overflow:hidden;font-size:18.5px;color:#1c1c1c;line-height:1.4;">----</div><div class="t" style="left:1324.2px;top:1270.8px;width:150.2px;overflow:hidden;font-size:18.5px;color:#1c1c1c;line-height:1.4;transform:scaleX(.87);transform-origin:0 0;">UEBERWEIS</div><div class="t" style="left:1594.7px;top:1270.8px;width:8.3px;overflow:hidden;font-size:18.5px;color:#1c1c1c;line-height:1.4;transform:scaleX(.87);transform-origin:0 0;">ARR</div><svg style="left:0;top:0" width="1603" height="1354"><g fill="none" stroke="#6b7a8f" stroke-width="1.6"><path d="M1286 1238.5 L1292.5 1245 L1299 1238.5"/><path d="M1286 1322.5 L1292.5 1329 L1299 1322.5"/></g></svg><div class="a" style="left:49px;top:1216px;width:1408px;height:90.5px;border:4px solid #0a5fa8;filter:drop-shadow(2px 3px 1.2px rgba(0,0,0,.42))"></div><svg style="left:0;top:0" width="1603" height="1354"><g fill="none" stroke="#1c1c1c" stroke-width="1.6" stroke-linecap="butt" stroke-linejoin="round"><path d="M32.9 205.3 H48.1 M40.5 197.6 V213" stroke-width="1.65"/><rect x="100.8" y="194.8" width="13.4" height="17.3" rx="2" stroke-width="1.75"/><path d="M97.1 198.2 V213 Q97.1 214.6 98.7 214.6 H111.2" stroke-width="1.75"/><path d="M164.2 213.5 L180.3 197.2" stroke-width="4.6" stroke-linecap="round"/><path d="M164.5 213.2 L177.0 200.5" stroke="#eef0f2" stroke-width="1.5" stroke-linecap="round"/><path d="M211 202.2 L217.8 209 L224.6 202.2" stroke-width="1.9"/><path d="M268.4 205 H284.4" stroke="#c6cad0" stroke-width="1.6"/><g transform="translate(104.5 -0.3)"><path d="M211 202.2 L217.8 209 L224.6 202.2" stroke-width="1.9"/></g><path d="M376.1 201.5 V198 Q376.1 196.9 377.2 196.9 H385.6 Q386.7 196.9 386.7 198 V201.5"/><path d="M376.1 209 H373.4 Q371.4 209 371.4 207 V204 Q371.4 201.9 373.4 201.9 H389.3 Q391.3 201.9 391.3 204 V207 Q391.3 209 389.3 209 H386.7"/><rect x="376.1" y="207.9" width="10.6" height="6.4" rx="1.3"/><circle cx="388.6" cy="204" r="0.8" fill="#1c1c1c" stroke="none"/><g fill="#1c1c1c" stroke="none"><circle cx="446.5" cy="196.7" r="1.85"/><circle cx="446.5" cy="205.4" r="1.85"/><circle cx="446.5" cy="214.2" r="1.85"/></g><path d="M509 196.8 L504.4 201.4 L509 206" stroke-width="1.7"/><path d="M504.6 201.4 H515.6 A5.6 5.6 0 0 1 515.6 212.6 H506.2" stroke-width="1.7"/><path d="M570.7 195.9 H583.6 L587.6 199.9 V213 Q587.6 214.5 586.1 214.5 H570.7 Q569.2 214.5 569.2 213 V197.4 Q569.2 195.9 570.7 195.9 Z" stroke-width="2"/><rect x="571.6" y="198.8" width="9.5" height="3.3" rx="1.4" fill="#1c1c1c" stroke="none"/><circle cx="578.5" cy="209" r="2.5" fill="#1c1c1c" stroke="none"/><circle cx="1587.3" cy="202.1" r="7.2" stroke-width="1.5"/><path d="M1592.8 207.6 L1601 215.8" stroke-width="1.6"/><g transform="translate(20.7 871.1)"><path d="M32.9 205.3 H48.1 M40.5 197.6 V213" stroke-width="1.65"/></g><g transform="translate(20.5 871.1)"><rect x="100.8" y="194.8" width="13.4" height="17.3" rx="2" stroke-width="1.75"/><path d="M97.1 198.2 V213 Q97.1 214.6 98.7 214.6 H111.2" stroke-width="1.75"/></g><g transform="translate(21 871.1)"><path d="M164.2 213.5 L180.3 197.2" stroke-width="4.6" stroke-linecap="round"/><path d="M164.5 213.2 L177.0 200.5" stroke="#eef0f2" stroke-width="1.5" stroke-linecap="round"/></g><g transform="translate(21 871.1)"><path d="M211 202.2 L217.8 209 L224.6 202.2" stroke-width="1.9"/></g><path d="M289.8 1076.5 H304.8" stroke-width="1.7"/><g transform="translate(124.5 870.8000000000001)"><path d="M211 202.2 L217.8 209 L224.6 202.2" stroke-width="1.9"/></g><g transform="translate(20.6 871.1)"><path d="M376.1 201.5 V198 Q376.1 196.9 377.2 196.9 H385.6 Q386.7 196.9 386.7 198 V201.5"/><path d="M376.1 209 H373.4 Q371.4 209 371.4 207 V204 Q371.4 201.9 373.4 201.9 H389.3 Q391.3 201.9 391.3 204 V207 Q391.3 209 389.3 209 H386.7"/><rect x="376.1" y="207.9" width="10.6" height="6.4" rx="1.3"/><circle cx="388.6" cy="204" r="0.8" fill="#1c1c1c" stroke="none"/></g><g transform="translate(20.3 871.1)"><g fill="#1c1c1c" stroke="none"><circle cx="446.5" cy="196.7" r="1.85"/><circle cx="446.5" cy="205.4" r="1.85"/><circle cx="446.5" cy="214.2" r="1.85"/></g></g><circle cx="1168.5" cy="1073.6" r="7.6" stroke-width="1.7"/><path d="M1174 1079.2 L1181.6 1086.8" stroke-width="1.8"/><path d="M1552.5 1069.8 H1572.5 M1556.5 1076 H1568.5 M1560.5 1082.2 H1564.5" stroke-width="1.6"/></g></svg></body></html>
